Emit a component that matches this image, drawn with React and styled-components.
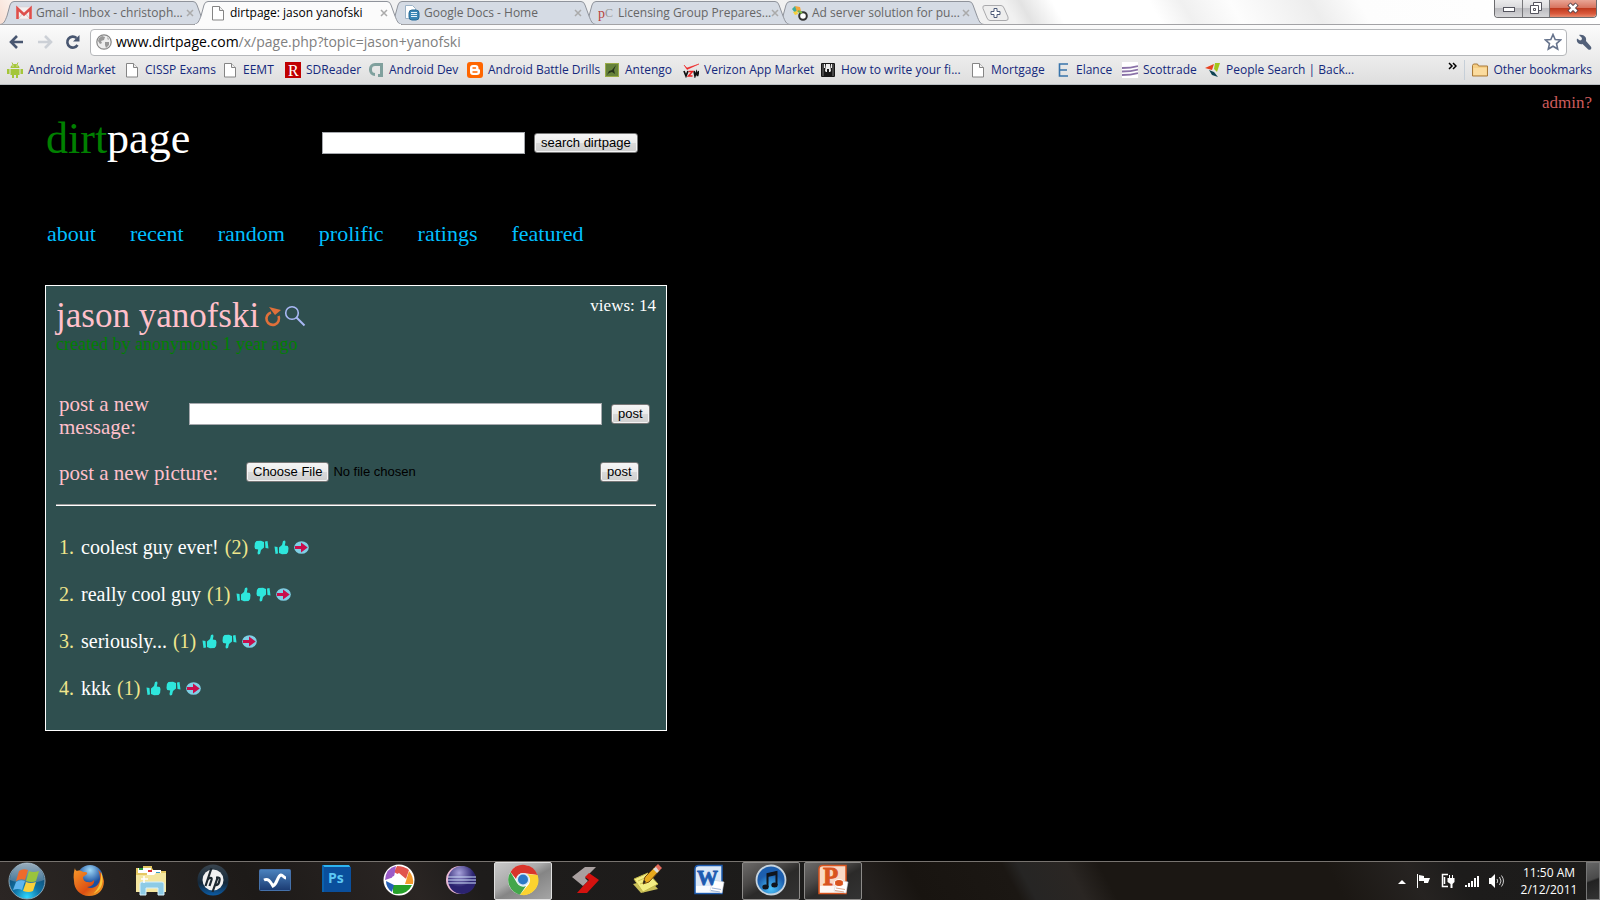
import React from "react";
import styled, { createGlobalStyle, css } from "styled-components";

const UI = `"Open Sans", "Noto Sans", sans-serif`;
const SERIF = `"Liberation Serif", serif`;
const ARIAL = `"Liberation Sans", sans-serif`;

const GlobalStyle = createGlobalStyle`
  *, *::before, *::after { box-sizing: border-box; }
  body { margin: 0; background: #000; }
  button, input { font-family: ${ARIAL}; font-size: 13px; }
  svg { display: block; flex: none; }
`;

const Desktop = styled.div`
  min-height: 100vh;
  display: flex;
  flex-direction: column;
`;

/* ---------- browser chrome ---------- */

const TitleBar = styled.div`
  display: flex;
  justify-content: space-between;
  height: 25px;
  border-bottom: 1px solid #a3a3a6;
  background: linear-gradient(60deg, #f8ded2 0, #fbf0ea 20px, #f2f2f2 60px, #f1f1f1 63%, #e3e3e3 64%, #fff 66%, #fff 72%, #f0f0f0 74%, #fdfdfd 77%, #ededed 82%, #fdfdfd 85%, #fff 100%);
`;

const TabStrip = styled.div`
  display: flex;
  height: 25px;
`;

const Tab = styled.div`
  position: relative;
  z-index: ${(p) => p.$z};
  display: flex;
  align-items: center;
  width: 208px;
  height: 25px;
  margin-right: -14px;
  padding: 1px 14px 0 16px;
`;

const TabShape = styled.svg`
  position: absolute;
  inset: 0;
`;

const TabTitle = styled.span`
  position: relative;
  flex: 1;
  margin-left: 4px;
  font: 12px/16px ${UI};
  color: ${(p) => (p.$active ? "#000" : "#666")};
  white-space: nowrap;
`;

const TabIcon = styled.span`
  position: relative;
`;

const CloseTab = styled.button`
  position: relative;
  display: flex;
  padding: 0;
  border: 0;
  background: none;
`;

const NewTab = styled.button`
  display: flex;
  margin: 5px 0 0 11px;
  padding: 0;
  border: 0;
  background: none;
  height: 16px;
`;

const WindowControls = styled.div`
  display: flex;
  height: 18px;
  margin-right: 3px;
  border: 1px solid #6b6b6e;
  border-top: 0;
  border-radius: 0 0 4px 4px;
  overflow: hidden;
`;

const WindowButton = styled.button`
  display: flex;
  align-items: center;
  justify-content: center;
  width: ${(p) => (p.$close ? 47 : 27)}px;
  padding: 0 0 2px;
  border: 0;
  border-left: ${(p) => (p.$first ? 0 : 1)}px solid #77777a;
  background: ${(p) =>
    p.$close
      ? "linear-gradient(#e9a595, #d8745f 45%, #c03a1e 50%, #d9593c 80%, #e88a6e)"
      : "linear-gradient(#ececed, #dadadc 45%, #bcbcc0 50%, #d6d6d8)"};
`;

const Toolbar = styled.form`
  display: flex;
  align-items: center;
  height: 35px;
  padding: 0 8px 1px 9px;
  background: linear-gradient(#fbfbfb, #ebebeb);
`;

const ToolButton = styled.button`
  display: flex;
  width: 16px;
  margin-right: ${(p) => p.$gap || 0}px;
  padding: 0;
  border: 0;
  background: none;
`;

const Omnibox = styled.div`
  flex: 1;
  display: flex;
  align-items: center;
  gap: 4px;
  height: 27px;
  margin-right: 9px;
  padding: 0 4px 0 5px;
  border: 1px solid #b5b7ba;
  border-radius: 4px;
  background: #fff;
`;

const Address = styled.a`
  flex: 1;
  font: 14px/20px ${UI};
  color: #808080;
  text-decoration: none;
  b { font-weight: normal; color: #000; }
`;

const Bookmarks = styled.nav`
  display: flex;
  align-items: center;
  height: 25px;
  padding: 0 8px 4px 7px;
  border-bottom: 1px solid #b9bdc1;
  background: linear-gradient(#ebebeb, #dedede);
`;

const Bookmark = styled.a`
  display: flex;
  align-items: center;
  gap: 5px;
  width: ${(p) => (p.$width ? p.$width + "px" : "auto")};
  font: 12px/16px ${UI};
  color: #15297c;
  text-decoration: none;
  white-space: nowrap;
`;

const BookmarkEnd = styled.div`
  display: flex;
  align-items: center;
  margin-left: auto;
  gap: 7px;
`;

const Separator = styled.span`
  width: 1px;
  height: 20px;
  background: #c6cfd8;
`;

/* ---------- web page ---------- */

const Page = styled.main`
  flex: 1;
  background: #000;
  font-family: ${SERIF};
  padding-bottom: 40px;
`;

const AdminBar = styled.div`
  display: flex;
  justify-content: flex-end;
  padding: 8px 8px 0;
  font-size: 17px;
  line-height: 20px;
  a { color: #cd5c5c; text-decoration: none; }
`;

const Header = styled.header`
  display: flex;
  align-items: flex-start;
  padding-left: 46px;
`;

const Logo = styled.h1`
  width: 276px;
  margin: 0;
  font-weight: normal;
  font-size: 44px;
  line-height: 52px;
  color: #fff;
  span { color: #008000; }
`;

const SearchForm = styled.form`
  display: flex;
  align-items: center;
  gap: 9px;
  margin-top: 19px;
`;

const TextInput = styled.input`
  width: ${(p) => p.$width}px;
  height: 22px;
  padding: 1px 3px;
  border: 1px solid #a5a8ad;
  background: #fff;
`;

const nativeButton = css`
  height: 20px;
  padding: 0 6px;
  border: 1px solid #777;
  border-radius: 3px;
  background: linear-gradient(#f6f6f6, #ebebeb 48%, #dadada 50%, #cfcfcf);
  box-shadow: inset 0 0 0 1px #f4f4f4;
  font-family: ${ARIAL};
  font-size: 13px;
  line-height: 16px;
  color: #000;
`;

const FormButton = styled.button`
  ${nativeButton}
`;

const SiteNav = styled.nav`
  display: flex;
  gap: 34px;
  margin: 56px 0 38px;
  padding-left: 47px;
  font-size: 22px;
  line-height: 26px;
  a { color: #00bfff; text-decoration: none; }
`;

const Panel = styled.section`
  width: 622px;
  margin-left: 45px;
  padding: 12px 10px 30px;
  border: 1px solid #fff;
  background: #2f4f4f;
`;

const TopicRow = styled.div`
  display: flex;
  align-items: flex-start;
`;

const TopicTitle = styled.h2`
  margin: 0 5px 0 0;
  font-weight: normal;
  font-size: 35px;
  line-height: 36px;
  color: #ffc0cb;
`;

const TopicLink = styled.a`
  margin: 7px 2px 0 0;
`;

const Views = styled.span`
  margin-left: auto;
  font-size: 17px;
  line-height: 16px;
  color: #fff;
`;

const Created = styled.p`
  margin: 0;
  font-size: 18px;
  line-height: 20px;
  color: #008000;
`;

const PostForm = styled.form`
  display: flex;
  align-items: center;
  margin-top: ${(p) => p.$top}px;
  padding-left: 3px;
`;

const PostLabel = styled.label`
  width: ${(p) => p.$width}px;
  padding: 4px ${(p) => p.$inset || 0}px 0 0;
  font-size: 21px;
  line-height: 23px;
  color: #ffc0cb;
`;

const FileInput = styled.input`
  width: 354px;
  height: 20px;
  line-height: 20px;
  color: #000;
  &::file-selector-button {
    ${nativeButton}
    margin: 0 4px 0 0;
  }
`;

const PostButton = styled(FormButton)`
  margin-left: ${(p) => p.$left || 0}px;
`;

const Rule = styled.hr`
  height: 2px;
  margin: 19px 0 29px;
  border: 0;
  border-top: 1px solid #9a9a9a;
  background: #fff;
`;

const Messages = styled.ol`
  display: flex;
  flex-direction: column;
  gap: 23px;
  margin: 0;
  padding: 0 0 0 3px;
  list-style: none;
  font-size: 20px;
  line-height: 24px;
  color: #f0e68c;
`;

const Message = styled.li`
  display: flex;
  align-items: center;
  gap: 6px;
`;

const Rank = styled.span`
  width: 16px;
`;

const MessageText = styled.span`
  color: #fff;
`;

const Votes = styled.span`
  display: flex;
  gap: 5px;
`;

const VoteButton = styled.button`
  display: flex;
  padding: 0;
  border: 0;
  background: none;
`;

/* ---------- taskbar ---------- */

const Taskbar = styled.footer`
  display: flex;
  align-items: center;
  height: 39px;
  border-top: 1px solid #77736f;
  background: linear-gradient(62deg, #2b2624 0, #1d1a18 16%, #2a2523 26%, #1e1c1b 30%, #1c1b1a 52%, #24201e 54%, #181410 57%, #1b1713 63%, #262524 64%, #2a2623 67%, #1b1713 69%, #1b1713 83%, #262321 88%, #1d1c1b 91%, #1c1b1a 100%);
`;

const StartButton = styled.button`
  display: flex;
  width: 60px;
  padding: 0 0 0 8px;
  border: 0;
  background: none;
`;

const Apps = styled.div`
  display: flex;
  gap: 4px;
`;

const AppButton = styled.button`
  display: flex;
  align-items: center;
  justify-content: center;
  width: 58px;
  height: 38px;
  padding: 0 0 2px;
  border: 1px solid transparent;
  border-radius: 2px;
  background: none;
  ${(p) =>
    p.$state === "open" &&
    css`
      border-color: #8d8b89;
      background: linear-gradient(150deg, #6c6a69 0, #4a4847 35%, #2b2a29 55%, #333 100%);
    `}
  ${(p) =>
    p.$state === "active" &&
    css`
      border-color: #e0e0e0;
      background: linear-gradient(150deg, #c9c9c9 0, #aaa 40%, #858585 55%, #a5a5a5 100%);
    `}
`;

const Tray = styled.div`
  display: flex;
  align-items: center;
  gap: 10px;
  margin-left: auto;
`;

const Clock = styled.time`
  width: 74px;
  margin-left: -2px;
  font: 12px/17px ${UI};
  color: #fff;
  text-align: center;
`;

const ShowDesktop = styled.button`
  width: 14px;
  height: 38px;
  margin-left: -10px;
  padding: 0;
  border: 1px solid #777;
  background: linear-gradient(160deg, #666 0, #4a4a4a 45%, #222 50%, #333);
`;

/* ---------- small icons ---------- */

const Ico = ({ w = 16, h = 16, children }) => (
  <svg width={w} height={h} viewBox={`0 0 ${w} ${h}`} aria-hidden="true">{children}</svg>
);

const PageIcon = () => (
  <Ico>
    <path d="M2.500 1.500h7l4 4v9.500h-11z" fill="#fff" stroke="#858585" />
    <path d="M9.500 1.500v4h4" fill="#eee" stroke="#858585" />
  </Ico>
);

const GmailIcon = () => (
  <Ico>
    <rect y="2" width="16" height="12" rx="1" fill="#f4f0ef" stroke="#dcc" strokeWidth=".6" />
    <path d="M3 13l4-5M13 13L9 8" stroke="#d8c8c6" />
    <path d="M1.500 14V3.500L8 9.500l6.500-6V14" fill="none" stroke="#de4f4b" strokeWidth="2.600" />
  </Ico>
);

const DocsIcon = () => (
  <Ico>
    <path d="M1.500.5h7l3 3v10h-10z" fill="#fff" stroke="#9bb2c6" />
    <rect x="5" y="5" width="10" height="10" rx="3" fill="#3a86b5" stroke="#276b97" />
    <path d="M7 7.500h6M7 9.500h6M7 11.500h6" stroke="#e4f1fa" />
  </Ico>
);

const PcIcon = () => (
  <Ico>
    <text x="0" y="13" fontFamily="Liberation Serif" fontSize="14" fill="#b8433d">p</text>
    <text x="7" y="12" fontFamily="Liberation Serif" fontSize="12" fill="#999">C</text>
  </Ico>
);

const AdIcon = () => (
  <Ico>
    <path d="M0 4l3-3 3 3-3 4z" fill="#3fae9a" />
    <path d="M3 1l5 1 1 4-4 1z" fill="#f2a73c" />
    <path d="M1 7l4-1 1 3-3 1z" fill="#f6d13c" />
    <circle cx="11" cy="11" r="3.800" fill="#fff" stroke="#333" strokeWidth="2" />
    <path d="M6 6l4 2" stroke="#7ab648" strokeWidth="2" />
  </Ico>
);

const AndroidIcon = () => (
  <Ico>
    <path d="M3.500 6a4.500 4 0 0 1 9 0zM3.500 7h9v6h-9zM0 7h2.500v5H0zM13.500 7H16v5h-2.500zM5 13h2v3H5zM9 13h2v3H9z" fill="#a4c639" />
    <path d="M5 .5L6.200 3M11 .5L9.800 3" stroke="#a4c639" />
    <path d="M5.500 4h1M9.500 4h1" stroke="#fff" />
  </Ico>
);

const RedRIcon = () => (
  <Ico>
    <rect width="16" height="16" fill="#c00000" />
    <text x="3" y="14" fontFamily="Liberation Serif" fontSize="16" fill="#fff">R</text>
  </Ico>
);

const DevIcon = () => (
  <Ico>
    <path d="M15 1v14h-5v-3h2V4H7a3 3 0 0 0-3 3v1a3 3 0 0 0 3 3v3a6 6 0 0 1-6-6V7a6 6 0 0 1 6-6z" fill="#7fa09d" />
  </Ico>
);

const BloggerIcon = () => (
  <Ico>
    <rect width="16" height="16" rx="3" fill="#f60" />
    <path d="M3 6a3 3 0 0 1 3-3h2.500a3 3 0 0 1 3 3v.5c0 .5.500 1 1.500 1V10a3 3 0 0 1-3 3H6a3 3 0 0 1-3-3z" fill="#fff" />
    <path d="M6 6h2.500M6 10h4" stroke="#f60" strokeWidth="1.400" strokeLinecap="round" />
  </Ico>
);

const AntIcon = () => (
  <Ico>
    <rect x="1.500" y="1.500" width="13" height="13" fill="#66823b" stroke="#9aab48" />
    <path d="M3 13l2-4 3-1 4-5-2 5 1 4-3-2-3 1z" fill="#26331c" />
  </Ico>
);

const VzwIcon = () => (
  <Ico>
    <path d="M1 3l3 3L16 2 4 7.500z" fill="#e22" stroke="#e22" strokeWidth=".5" />
    <path d="M1 9l2 5 2-5M11 9l1 5 1.500-4 1 4 1.300-5" fill="none" stroke="#111" strokeWidth="1.700" />
    <path d="M5.500 9.500h4l-4 4.500h4" fill="none" stroke="#e22" strokeWidth="1.500" />
  </Ico>
);

const TieIcon = () => (
  <Ico>
    <rect x="1" y="1" width="14" height="14" rx="1" fill="#161616" />
    <path d="M4 2h1v4H4zM11 2h1v4h-1zM6 2h4l1 7-1 1H9V7H7v3H6L5 9z" fill="#eee" />
    <path d="M3 2v12M13 2v12" stroke="#777" />
  </Ico>
);

const ElanceIcon = () => (
  <Ico>
    <path d="M13 2H4.500v12H13M5 8h7" fill="none" stroke="#3874ab" strokeWidth="1.600" />
  </Ico>
);

const ScottIcon = () => (
  <Ico>
    <rect width="16" height="16" fill="#fff" />
    <path d="M0 6c6 0 9 0 16-2M0 9.500c6 0 9 0 16-2M0 13c6 0 9 0 16-2" fill="none" stroke="#8a72a8" strokeWidth="1.800" />
  </Ico>
);

const PeopleIcon = () => (
  <Ico>
    <path d="M0 6l9-4-2 6z" fill="#e8411f" />
    <path d="M10 1h5l-3 9-3-3z" fill="#a2c51c" />
    <path d="M4 8l5 2 4 5-6-2z" fill="#0e4353" />
  </Ico>
);

const FolderIcon = () => (
  <Ico>
    <path d="M.5 14V3.500l1-1.500h4l1 2h9V14z" fill="#f6cf85" stroke="#a97a3b" />
    <path d="M1.500 6h13v7h-13z" fill="#fbdc9f" />
  </Ico>
);

const Thumb = ({ down }) => (
  <Ico w={15} h={15}>
    <path
      transform={down ? "rotate(180 7.500 7.500)" : undefined}
      d="M.5 6.500l3 .5.500 6.500-2.500.5zM5 7.500l3-2.500L9 1l2-.5.500 1.500-.7 3.500 3 .5.700 2-.4 4-1.500 2-4.600.2L5 13z"
      fill="#2ee6dc"
    />
  </Ico>
);

const GoArrow = () => (
  <Ico w={15} h={15}>
    <ellipse cx="7.500" cy="7.500" rx="7.300" ry="6.300" fill="#7fd0e6" />
    <path d="M1 6h6V2.500l6.700 5-6.700 5V9H1z" fill="#c90d4b" />
  </Ico>
);

/* ---------- taskbar icons ---------- */

const Orb = () => (
  <svg width="38" height="38" viewBox="0 0 38 38" aria-hidden="true">
    <defs>
      <radialGradient id="orb" cx=".5" cy=".95" r=".9">
        <stop offset="0" stopColor="#2fd8ff" /><stop offset=".4" stopColor="#0f75a8" /><stop offset="1" stopColor="#123b60" />
      </radialGradient>
      <linearGradient id="orbTop" x2="0" y2="1">
        <stop offset="0" stopColor="#c8d4dc" /><stop offset="1" stopColor="#4f7d9c" />
      </linearGradient>
    </defs>
    <circle cx="19" cy="19" r="18" fill="url(#orb)" stroke="#8aa5b5" />
    <path d="M2 18A17 17 0 0 1 36 18C27 22 11 22 2 18z" fill="url(#orbTop)" opacity=".75" />
    <path d="M11 9q4-3 9-1l-3 10q-4-2-9 1z" fill="#ee6a2b" />
    <path d="M21 9q4 2 10 0l-3 10q-4 2-10 0z" fill="#9ac43c" />
    <path d="M8 20q4-3 9-1l-3 9q-4-2-9 0z" fill="#5fb5ee" />
    <path d="M18 20q4 2 10 0l-3 9q-4 2-10 0z" fill="#fbd03b" />
  </svg>
);

const AppIco = ({ children }) => (
  <svg width="32" height="32" viewBox="0 0 32 32" aria-hidden="true">{children}</svg>
);

const Firefox = () => (
  <AppIco>
    <defs>
      <linearGradient id="fx" x2="1" y2="1"><stop offset="0" stopColor="#f79a2a" /><stop offset=".6" stopColor="#dd4f12" /><stop offset="1" stopColor="#f5b52a" /></linearGradient>
      <radialGradient id="fxb" cx=".5" cy=".2"><stop offset="0" stopColor="#9fd9f8" /><stop offset="1" stopColor="#1b4f9f" /></radialGradient>
    </defs>
    <circle cx="17" cy="14" r="13" fill="url(#fxb)" />
    <path d="M2 4c0 2 1 2 2 3 2-1 5 0 6 1 2 0 5 0 4 2l-4 3c0 3 2 5 5 5 3 1 5-1 6-2 1 4-3 7-7 7 6 3 12-1 13-8 0-4-1-7-2-9 3 2 5 6 6 11 0 9-6 15-15 15S1 25 1 17C0 12 1 7 2 4z" fill="url(#fx)" />
    <path d="M28 8c4 9 1 18-8 22 6-5 8-12 8-22z" fill="#f8c53a" />
  </AppIco>
);

const Explorer = () => (
  <AppIco>
    <path d="M1 4h7v-2h9v2l2 3h12v21H1z" fill="#e5c864" />
    <path d="M3 4h13v5H3zM12 6h14v5H12z" fill="#fff" />
    <path d="M4 4h4v2H4z" fill="#2a9d3a" /><path d="M13 6h4v2h-4z" fill="#d33" /><path d="M21 8h4v2h-4z" fill="#39c" />
    <path d="M1 11h18l2-2h10v19H1z" fill="#f4e6a0" />
    <path d="M5 31V20q0-2 2-2h20q2 0 2 2v11h-6v-7H11v7z" fill="#8dcbe6" stroke="#d6f0fb" />
    <path d="M9 12v7M6 15h7" stroke="#fff" strokeWidth="1.500" />
  </AppIco>
);

const Hp = () => (
  <AppIco>
    <defs><linearGradient id="hp" x2="0" y2="1"><stop offset="0" stopColor="#38444e" /><stop offset=".6" stopColor="#14283a" /><stop offset="1" stopColor="#0b5ca6" /></linearGradient></defs>
    <circle cx="16" cy="16" r="15.500" fill="url(#hp)" />
    <circle cx="16" cy="16" r="10.500" fill="#f2f2f2" />
    <path d="M14.500 4l-6 18M10.500 16c2-3 5-3 4 0l-2 6M21 12.500l-5.500 15.500M19 13.500h2.500c2 0 1 3 .5 5s-1.500 3-4.500 2.500" fill="none" stroke="#1d2830" strokeWidth="2.200" />
  </AppIco>
);

const Wave = () => (
  <AppIco>
    <defs><linearGradient id="wv" x2="0" y2="1"><stop offset="0" stopColor="#4b83bf" /><stop offset="1" stopColor="#1b3b72" /></linearGradient></defs>
    <rect x=".5" y="5.500" width="31" height="21" rx="1" fill="url(#wv)" stroke="#4571aa" />
    <path d="M5 16c4-2 6 1 9 6 5-3 4-10 8-11 2 0 3 3 5 3" fill="none" stroke="#fff" strokeWidth="3" />
  </AppIco>
);

const Photoshop = () => (
  <AppIco>
    <path d="M1 1h27v27H1z" fill="#0b62ae" /><path d="M2 1h26l2 3H4z" fill="#2db4f0" />
    <path d="M3 3h27v25H3z" fill="#0a4f9c" />
    <text x="7" y="19" fontFamily="Open Sans" fontWeight="bold" fontSize="14" fill="#5cc8f5">Ps</text>
  </AppIco>
);

const Picasa = () => (
  <AppIco>
    <circle cx="16" cy="16" r="15.500" fill="#fff" />
    <path d="M14 2q7 0 12 4l-3 9-12-7z" fill="#e1554e" />
    <path d="M26 7q5 6 4 13h-8z" fill="#f3992d" />
    <path d="M29 21q-4 9-15 9-3 0-4-1v-8z" fill="#26a12a" />
    <path d="M9 28q-6-4-6-11l8 4z" fill="#255fb5" />
    <path d="M2 16Q3 4 13 2l-2 11z" fill="#9b5bc7" />
    <path d="M9 13l7-4 7 6-2 6H11z" fill="#fff" />
  </AppIco>
);

const Eclipse = () => (
  <AppIco>
    <defs><radialGradient id="ec" cx=".4" cy=".25"><stop offset="0" stopColor="#a8a3dc" /><stop offset="1" stopColor="#2b2370" /></radialGradient></defs>
    <circle cx="15" cy="16" r="14" fill="#e9b8d4" /><circle cx="17" cy="16" r="14" fill="url(#ec)" />
    <path d="M3 13h28M3 16h28M3 19h28" stroke="#cfe0fa" />
  </AppIco>
);

const Chrome = () => (
  <AppIco>
    <circle cx="16" cy="16" r="15" fill="#fff" />
    <path d="M3.500 8A15 15 0 0 1 30.500 11L16 9a7 7 0 0 0-7 6z" fill="#d9352b" />
    <path d="M3.500 8A15 15 0 0 0 13 30.700L19 22a7 7 0 0 1-9-3z" fill="#43a64b" />
    <path d="M30.500 11A15 15 0 0 1 13 30.700L22 20c2-4 1-7-2-10z" fill="#fbd32f" />
    <circle cx="16" cy="15.500" r="6.500" fill="#d6e7f5" /><circle cx="16" cy="15.500" r="5" fill="#2c79c7" />
  </AppIco>
);

const RedS = () => (
  <AppIco>
    <path d="M16 3h11l-9 9-2 2 3 3-5 5L3 13z" fill="#a9a0a0" />
    <path d="M20 9l10 7-12 13H8l7-8 5-5-4-3z" fill="#d4120f" />
  </AppIco>
);

const Notes = () => (
  <AppIco>
    <path d="M2 20l17-4 8 9-17 4z" fill="#c9bf59" />
    <path d="M3 15l14-6 10 11-15 8z" fill="#f3ed83" stroke="#c4b94b" /><path d="M7 17l9-4M9 20l9-4" stroke="#cdc153" />
    <path d="M12 20l2-7L25 2l4 4-11 12z" fill="#e8a91c" stroke="#75490f" />
    <path d="M24 3l3-3 4 4-3 3z" fill="#e46c5e" /><path d="M22 5l3-2 3 4-2 2z" fill="#ddd" /><path d="M12 20l1-4 2 2z" fill="#222" />
  </AppIco>
);

const Office = ({ letter, color, pale, chart }) => (
  <AppIco>
    <path d="M6 1.500h23v28H2V5q0-3.500 4-3.500z" fill={pale} stroke={color} strokeWidth="1.500" />
    <path d="M3 22h25v6.500H3z" fill="#fff" opacity=".8" />
    <path d="M20 16l11 2-2 11-12-2z" fill="#fff" stroke="#c8d0da" strokeWidth=".6" />
    <text x={chart ? 6 : 4} y="21" fontFamily="Liberation Serif" fontWeight="bold" fontSize={chart ? 25 : 21} stroke={color} strokeWidth=".8" fill={color}>{letter}</text>
    {chart ? <ellipse cx="22" cy="19" rx="4.500" ry="3.500" fill={color} stroke="#fff" /> : null}
    <path d="M19 24l9 1.500M18 26.500l9 1.500" stroke={chart ? "#d9a78f" : "#9fb4d6"} />
  </AppIco>
);

const ITunes = () => (
  <AppIco>
    <defs><radialGradient id="it" cx=".5" cy=".8"><stop offset="0" stopColor="#4cc4fb" /><stop offset="1" stopColor="#1c5eae" /></radialGradient></defs>
    <circle cx="16" cy="16" r="14.500" fill="url(#it)" stroke="#c7d4df" strokeWidth="1.800" />
    <path d="M12.500 23V10l9-2v13" fill="none" stroke="#10151d" strokeWidth="2" /><path d="M12.500 9.500l9-2v3.500l-9 2z" fill="#10151d" />
    <ellipse cx="10.500" cy="23" rx="3.200" ry="2.500" fill="#10151d" /><ellipse cx="19.500" cy="21" rx="3.200" ry="2.500" fill="#10151d" />
  </AppIco>
);

/* ---------- data ---------- */

const tabs = [
  { title: "Gmail - Inbox - christoph...", Icon: GmailIcon },
  { title: "dirtpage: jason yanofski", Icon: PageIcon, active: true },
  { title: "Google Docs - Home", Icon: DocsIcon },
  { title: "Licensing Group Prepares...", Icon: PcIcon },
  { title: "Ad server solution for pu...", Icon: AdIcon },
];

const bookmarks = [
  ["Android Market", AndroidIcon, 117],
  ["CISSP Exams", PageIcon, 98],
  ["EEMT", PageIcon, 63],
  ["SDReader", RedRIcon, 83],
  ["Android Dev", DevIcon, 99],
  ["Android Battle Drills", BloggerIcon, 137],
  ["Antengo", AntIcon, 79],
  ["Verizon App Market", VzwIcon, 137],
  ["How to write your fi...", TieIcon, 150],
  ["Mortgage", PageIcon, 85],
  ["Elance", ElanceIcon, 67],
  ["Scottrade", ScottIcon, 83],
  ["People Search | Back...", PeopleIcon, 0],
];

const sections = ["about", "recent", "random", "prolific", "ratings", "featured"];

const messages = [
  { text: "coolest guy ever!", score: 2, downFirst: true },
  { text: "really cool guy", score: 1 },
  { text: "seriously...", score: 1 },
  { text: "kkk", score: 1 },
];

const apps = [
  ["Firefox", Firefox],
  ["Windows Explorer", Explorer],
  ["HP", Hp],
  ["Monitor", Wave],
  ["Photoshop", Photoshop],
  ["Picasa", Picasa],
  ["Eclipse", Eclipse],
  ["Chrome", Chrome, "active"],
  ["SlickRun", RedS],
  ["Notes", Notes],
  ["Word", () => <Office letter="W" color="#1d5bb0" pale="#dbe8f7" />],
  ["iTunes", ITunes, "open"],
  ["PowerPoint", () => <Office letter="P" color="#d9541e" pale="#f9d9c6" chart />, "open"],
];

const stop = (e) => e.preventDefault();

function BrowserTab({ title, Icon, active, z }) {
  return (
    <Tab $z={z}>
      <TabShape width="208" height="25" viewBox="0 0 208 25" aria-hidden="true">
        <path
          d="M0 24.500C4 24 5 21 7 16L10 5Q11 1.500 14 1.500H193Q196 1.500 197 5L201 16C203 21 204 24 208 24.500"
          fill={active ? "#fbfbfb" : "#d5dbe4"}
          stroke="#8f939b"
        />
        {active ? <path d="M1 24.500H207" stroke="#fbfbfb" /> : <path d="M0 24.500H208" stroke="#a3a3a6" />}
      </TabShape>
      <TabIcon><Icon /></TabIcon>
      <TabTitle $active={active}>{title}</TabTitle>
      <CloseTab aria-label={`Close ${title}`}>
        <Ico w={8} h={8}><path d="M1 1l6 6M7 1L1 7" stroke="#aaa" strokeWidth="1.500" /></Ico>
      </CloseTab>
    </Tab>
  );
}

function Browser() {
  return (
    <header>
      <TitleBar>
        <TabStrip>
          {tabs.map((t, i) => <BrowserTab key={t.title} {...t} z={t.active ? 10 : 8 - i} />)}
          <NewTab aria-label="New tab">
            <Ico w={30} h={16}>
              <path d="M2 3.500Q1 .5 4 .5H20Q22 .5 23 3l4 9q1 3.500-2 3.500H9Q7 15.500 6 13z" fill="#eee" stroke="#a9a9ac" />
              <path d="M13 3.500h3v3h3v3h-3v3h-3v-3h-3v-3h3z" fill="#fff" stroke="#4c5a78" />
            </Ico>
          </NewTab>
        </TabStrip>
        <WindowControls>
          <WindowButton $first aria-label="Minimize">
            <Ico w={12} h={12}><rect x=".5" y="5.500" width="11" height="4" fill="#fff" stroke="#55555f" /></Ico>
          </WindowButton>
          <WindowButton aria-label="Restore">
            <Ico w={12} h={12}>
              <path d="M3.500.5h8v8h-8z" fill="#fff" stroke="#55555f" />
              <path d="M.5 3.500h8v8h-8z" fill="#fff" stroke="#55555f" /><path d="M3.500 6.500h2v2h-2z" fill="none" stroke="#55555f" />
            </Ico>
          </WindowButton>
          <WindowButton $close aria-label="Close">
            <Ico w={12} h={12}>
              <path d="M2 2l8 8M10 2l-8 8" stroke="#54424a" strokeWidth="4.500" />
              <path d="M2.500 2.500l7 7M9.500 2.500l-7 7" stroke="#fff" strokeWidth="2.500" />
            </Ico>
          </WindowButton>
        </WindowControls>
      </TitleBar>
      <Toolbar onSubmit={stop}>
        <ToolButton type="button" $gap={12} aria-label="Back">
          <Ico><path d="M14 8H3M8 2L2 8l6 6" fill="none" stroke="#485670" strokeWidth="2.600" /></Ico>
        </ToolButton>
        <ToolButton type="button" $gap={12} aria-label="Forward">
          <Ico><path d="M1 8h11M8 2l6 6-6 6" fill="none" stroke="#ccd0d6" strokeWidth="2.600" /></Ico>
        </ToolButton>
        <ToolButton type="button" $gap={9} aria-label="Reload">
          <Ico>
            <path d="M11.500 4A5.500 5.500 0 1 0 12.500 11" fill="none" stroke="#485670" strokeWidth="2.600" />
            <path d="M14.500 1v6.500H8z" fill="#485670" />
          </Ico>
        </ToolButton>
        <Omnibox>
          <Ico>
            <circle cx="8" cy="8" r="7.200" fill="#eee" stroke="#888" strokeWidth="1.200" />
            <path d="M3 4l3-2 3 1-1 3-3 1 1 2-2 1-2-3zM9 8l4 0 0 3-3 3-1-3zM11 3l2 2-1 1z" fill="#999" />
          </Ico>
          <Address href="#page"><b>www.dirtpage.com</b>/x/page.php?topic=jason+yanofski</Address>
          <Ico w={18} h={18}><path d="M9 1.500l2.200 5 5.300.5-4 3.600 1.200 5.400L9 13.200 4.300 16l1.200-5.400-4-3.600 5.300-.5z" fill="#fff" stroke="#66738c" strokeWidth="1.600" /></Ico>
        </Omnibox>
        <ToolButton type="button" aria-label="Settings">
          <Ico>
            <path d="M3 1l3 3-.5 2L4 6.500 1 4.500C0 8 3 11 6.500 10l5.500 5.200c1 .8 2 .7 2.800 0s.7-2 0-2.800L10 7C11 3.500 8 0 3 1z" fill="#526079" />
          </Ico>
        </ToolButton>
      </Toolbar>
      <Bookmarks>
        {bookmarks.map(([name, Icon, width]) => (
          <Bookmark key={name} href="#bookmark" $width={width}><Icon />{name}</Bookmark>
        ))}
        <BookmarkEnd>
          <Ico w={9} h={16}><path d="M1 1l3 3-3 3M5 1l3 3-3 3" fill="none" stroke="#000" strokeWidth="1.500" /></Ico>
          <Separator />
          <Bookmark href="#bookmark"><FolderIcon />Other bookmarks</Bookmark>
        </BookmarkEnd>
      </Bookmarks>
    </header>
  );
}

function DirtPage() {
  return (
    <Page id="page">
      <AdminBar><a href="#admin">admin?</a></AdminBar>
      <Header>
        <Logo><span>dirt</span>page</Logo>
        <SearchForm onSubmit={stop}>
          <TextInput $width={203} aria-label="search" />
          <FormButton>search dirtpage</FormButton>
        </SearchForm>
      </Header>
      <SiteNav>
        {sections.map((s) => <a key={s} href={`#${s}`}>{s}</a>)}
      </SiteNav>
      <Panel>
        <TopicRow>
          <TopicTitle>jason yanofski</TopicTitle>
          <TopicLink href="#refresh" aria-label="Refresh">
            <Ico w={18} h={22}>
              <path d="M7 7.500A6.300 6.300 0 1 0 14.500 11" fill="none" stroke="#e0703a" strokeWidth="2.600" />
              <path d="M5 2l12 3-6 5z" fill="#e0703a" />
            </Ico>
          </TopicLink>
          <TopicLink href="#find" aria-label="Find">
            <Ico w={22} h={22}>
              <circle cx="8" cy="8" r="6.300" fill="none" stroke="#a9b8f5" strokeWidth="1.600" />
              <path d="M12.500 12.500l8 8" stroke="#a9b8f5" strokeWidth="2" />
            </Ico>
          </TopicLink>
          <Views>views: 14</Views>
        </TopicRow>
        <Created>created by anonymous 1 year ago</Created>
        <PostForm $top={35} onSubmit={stop}>
          <PostLabel $width={130} $inset={20} htmlFor="message">post a new message:</PostLabel>
          <TextInput id="message" $width={413} />
          <PostButton $left={9}>post</PostButton>
        </PostForm>
        <PostForm $top={19} onSubmit={stop}>
          <PostLabel $width={187} htmlFor="picture">post a new picture:</PostLabel>
          <FileInput id="picture" type="file" />
          <PostButton>post</PostButton>
        </PostForm>
        <Rule />
        <Messages>
          {messages.map((m, i) => (
            <Message key={m.text}>
              <Rank>{i + 1}.</Rank>
              <MessageText>{m.text}</MessageText>
              <span>({m.score})</span>
              <Votes>
                <VoteButton aria-label={m.downFirst ? "Vote down" : "Vote up"}><Thumb down={m.downFirst} /></VoteButton>
                <VoteButton aria-label={m.downFirst ? "Vote up" : "Vote down"}><Thumb down={!m.downFirst} /></VoteButton>
                <VoteButton aria-label="Open message"><GoArrow /></VoteButton>
              </Votes>
            </Message>
          ))}
        </Messages>
      </Panel>
    </Page>
  );
}

function WindowsTaskbar() {
  return (
    <Taskbar>
      <StartButton aria-label="Start"><Orb /></StartButton>
      <Apps>
        {apps.map(([name, Icon, state]) => (
          <AppButton key={name} $state={state} aria-label={name}><Icon /></AppButton>
        ))}
      </Apps>
      <Tray>
        <Ico w={8} h={5}><path d="M0 5l4-4 4 4z" fill="#fff" /></Ico>
        <Ico w={15} h={16}><path d="M1.500 1v14" stroke="#fff" /><path d="M3 2l5 1v2h6l-2 5H8V8H3z" fill="#fff" /></Ico>
        <Ico w={14} h={16}>
          <path d="M7 1.500H1.500v12H7M3.500 4v7" fill="none" stroke="#fff" strokeWidth="1.500" />
          <path d="M8.500 2v4M11.500 2v4" stroke="#fff" /><path d="M6.500 5h7v4l-2 2v4h-2v-4l-3-2z" fill="#fff" />
        </Ico>
        <Ico w={14} h={14}><path d="M0 11h2v2H0zM3 9h2v4H3zM6 7h2v6H6zM9 4h2v9H9zM12 2h2v11h-2z" fill="#fff" /></Ico>
        <Ico w={15} h={16}>
          <path d="M0 5h2l4-4v14l-4-4H0z" fill="#fff" />
          <path d="M8 6q1.500 2 0 4M10.500 4q3 4 0 8M12.500 2.500q4 5.500 0 11" fill="none" stroke="#ccc" />
        </Ico>
        <Clock>11:50 AM<br />2/12/2011</Clock>
        <ShowDesktop aria-label="Show desktop" />
      </Tray>
    </Taskbar>
  );
}

export default function App() {
  return (
    <Desktop>
      <GlobalStyle />
      <Browser />
      <DirtPage />
      <WindowsTaskbar />
    </Desktop>
  );
}
